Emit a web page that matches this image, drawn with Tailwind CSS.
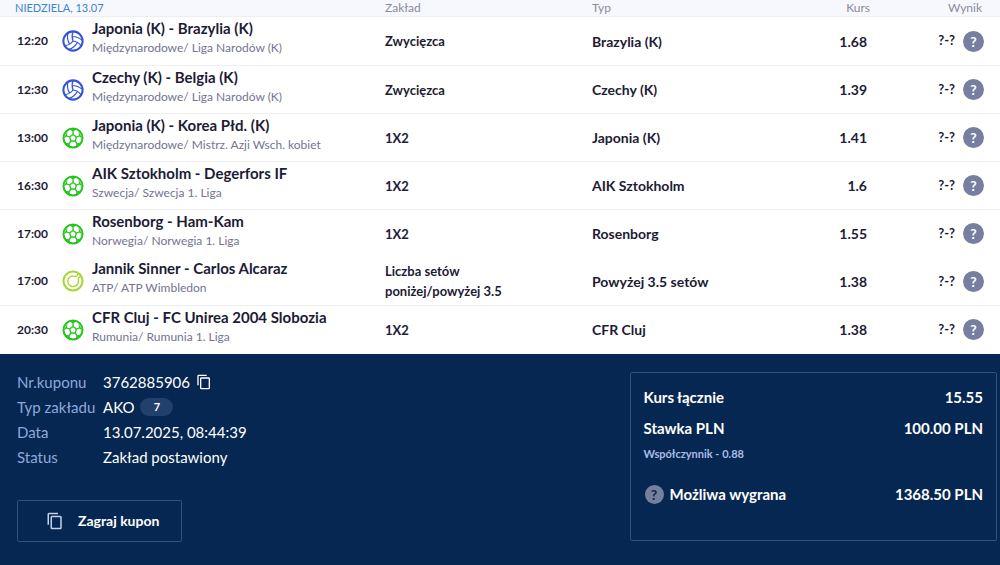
<!DOCTYPE html>
<html lang="pl">
<head>
  <meta charset="UTF-8">
  <meta name="viewport" content="width=device-width, initial-scale=1.0">
  <title>Kupon</title>
  <script src="https://cdn.jsdelivr.net/npm/@tailwindcss/browser@4"></script>
</head>
<body class="min-h-screen flex flex-col bg-[#062751] font-['Lato',sans-serif]">

<!-- Icons -->
<svg class="hidden">
  <symbol id="volleyball" viewBox="0 0 24 24">
    <g fill="none" stroke="#3553d6" stroke-linecap="round">
      <circle cx="12" cy="12" r="10.500" fill="#fff" stroke-width="2.200"/>
      <path stroke-width="1.300" d="M11.100 7.100a16.550 16.550 0 0 1 10.900 4M12 12a12.600 12.600 0 0 1-8.700 5M16.800 13.600a16.550 16.550 0 0 1-9 7.500M20.700 17a12.800 12.800 0 0 0-8.700-5 13.300 13.300 0 0 1 0-10M6.300 3.800a16.550 16.550 0 0 0 1.900 11.500"/>
    </g>
  </symbol>
  <symbol id="football" viewBox="0 0 22 22">
    <circle cx="11" cy="11" r="9.500" fill="#fff" stroke="#25c71a" stroke-width="2"/>
    <path d="M11 7.500L14.400 10L13.100 14H8.900L7.600 10ZM11 7.500V4.500M14.400 10L17.300 9M13.100 14L15 16.600M8.900 14L7 16.600M7.600 10L4.700 9" fill="none" stroke="#25c71a" stroke-width="1.300"/>
    <path d="M7.800 2H14.200L11 5ZM16.600 4.500L20.300 11.500L17 9.200ZM5.400 4.500L1.700 11.500L5 9.200ZM19 15.800L13.500 20.300L14.700 16.200ZM3 15.800L8.500 20.300L7.300 16.200Z" fill="#25c71a"/>
  </symbol>
  <symbol id="tennis" viewBox="0 0 22 22">
    <circle cx="11" cy="11" r="9.500" fill="#fff" stroke="#a3d82c" stroke-width="2"/>
    <path d="M15.500 3.500C16 6 14.500 6.800 12 6.300C8.500 5.600 5.800 8 5.800 11.200C5.800 14.500 8.500 16.800 11.500 16.500C15 16.200 16.800 13.500 16.300 10.500C16 8 17 6.800 18.500 7" fill="none" stroke="#a3d82c" stroke-width="1.300"/>
  </symbol>
  <symbol id="copy" viewBox="0 0 24 24">
    <path fill="currentColor" d="M16 1H4a2 2 0 0 0-2 2v14h2V3h12V1zm3 4H8a2 2 0 0 0-2 2v14a2 2 0 0 0 2 2h11a2 2 0 0 0 2-2V7a2 2 0 0 0-2-2zm0 16H8V7h11v14z"/>
  </symbol>
</svg>

<table class="w-full table-fixed border-collapse bg-white text-left text-[#1d1b35]">
  <colgroup>
    <col class="w-[62px]">
    <col>
    <col class="w-[207px]">
    <col class="w-[19%]">
    <col class="w-[88px]">
    <col class="w-[13%]">
  </colgroup>
  <thead class="bg-[#f7f8fd] text-xs leading-4 text-[#8a8b9c]">
  <tr class="h-[16px] border-b border-[#eceef3]">
    <th colspan="2" class="pl-[15px] text-[11px] font-normal text-[#3b86cf]">NIEDZIELA, 13.07</th>
    <th class="font-normal">Zakład</th>
    <th class="font-normal">Typ</th>
    <th class="font-normal text-right">Kurs</th>
    <th class="pr-[18px] font-normal text-right">Wynik</th>
  </tr>
  </thead>
  <tbody id="bets"></tbody>
</table>

<div class="flex grow items-start justify-between pt-[18px] pr-[3px] pl-[17px] text-white">
  <div class="-mt-[2px]">
    <dl class="grid grid-cols-[86px_auto] text-[15px] leading-[25px]">
      <dt class="text-[#8fa8dc]">Nr.kuponu</dt>
      <dd class="flex items-center gap-[6px]">3762885906
        <button aria-label="Kopiuj numer"><svg class="size-4"><use href="#copy"/></svg></button>
      </dd>
      <dt class="text-[#8fa8dc]">Typ zakładu</dt>
      <dd class="flex items-center gap-[6px]">AKO
        <span class="h-[18px] w-[33px] rounded-full bg-[#21406b] text-center text-[11px] leading-[18px] font-bold">7</span>
      </dd>
      <dt class="text-[#8fa8dc]">Data</dt>
      <dd>13.07.2025, 08:44:39</dd>
      <dt class="text-[#8fa8dc]">Status</dt>
      <dd>Zakład postawiony</dd>
    </dl>
    <button class="mt-[30px] flex h-[42px] items-center gap-[14px] rounded-xs border border-[#2f5180] pr-[22px] pl-[28px] text-[14px] font-bold">
      <svg class="size-[18px] text-[#c3d2e8]"><use href="#copy"/></svg>Zagraj kupon
    </button>
  </div>

  <dl class="grid w-[37.5%] min-w-[300px] grid-cols-[auto_auto] rounded-xs border border-[#2f5180] px-[13px] pt-[9px] pb-[30px] text-[15px] leading-[31px] font-bold">
    <dt>Kurs łącznie</dt>
    <dd class="text-right">15.55</dd>
    <dt>Stawka PLN</dt>
    <dd class="text-right">100.00 PLN</dd>
    <dt class="col-span-2 mb-[15px] text-[11px] leading-[20px] text-[#a9bbe6]">Współczynnik - 0.88</dt>
    <dt class="flex items-center gap-[6px]">
      <button aria-label="Informacja" class="ml-px size-[19px] rounded-full bg-[#777f9e] text-sm leading-[19px] font-bold text-[#062751]">?</button>Możliwa wygrana
    </dt>
    <dd class="text-right">1368.50 PLN</dd>
  </dl>
</div>

<script>
  const bets = [
    { time: "12:20", icon: "volleyball", match: "Japonia (K) - Brazylia (K)", league: "Międzynarodowe/ Liga Narodów (K)", bet: "Zwycięzca", type: "Brazylia (K)", odds: "1.68" },
    { time: "12:30", icon: "volleyball", match: "Czechy (K) - Belgia (K)", league: "Międzynarodowe/ Liga Narodów (K)", bet: "Zwycięzca", type: "Czechy (K)", odds: "1.39" },
    { time: "13:00", icon: "football", match: "Japonia (K) - Korea Płd. (K)", league: "Międzynarodowe/ Mistrz. Azji Wsch. kobiet", bet: "1X2", type: "Japonia (K)", odds: "1.41" },
    { time: "16:30", icon: "football", match: "AIK Sztokholm - Degerfors IF", league: "Szwecja/ Szwecja 1. Liga", bet: "1X2", type: "AIK Sztokholm", odds: "1.6" },
    { time: "17:00", icon: "football", match: "Rosenborg - Ham-Kam", league: "Norwegia/ Norwegia 1. Liga", bet: "1X2", type: "Rosenborg", odds: "1.55", noLine: true },
    { time: "17:00", icon: "tennis", match: "Jannik Sinner - Carlos Alcaraz", league: "ATP/ ATP Wimbledon", bet: "Liczba setów poniżej/powyżej 3.5", type: "Powyżej 3.5 setów", odds: "1.38" },
    { time: "20:30", icon: "football", match: "CFR Cluj - FC Unirea 2004 Slobozia", league: "Rumunia/ Rumunia 1. Liga", bet: "1X2", type: "CFR Cluj", odds: "1.38", noLine: true }
  ];

  document.getElementById("bets").innerHTML = bets.map(b => `
    <tr class="h-[48px] first:h-[49px] ${b.noLine ? '' : 'border-b border-[#eff0f5]'}">
      <td class="pl-[17px] text-xs font-bold">${b.time}</td>
      <td>
        <div class="flex items-center gap-[8px]">
          <svg class="size-[22px] shrink-0"><use href="#${b.icon}"/></svg>
          <div class="pb-[7px]">
            <div class="text-[15px] leading-[20px] font-bold">${b.match}</div>
            <div class="text-xs leading-[19px] text-[#737490]">${b.league}</div>
          </div>
        </div>
      </td>
      <td class="pr-[80px] text-[13px] leading-[20px] font-bold">${b.bet}</td>
      <td class="text-[14px] font-bold">${b.type}</td>
      <td class="pr-[3px] text-right text-[14px] font-bold">${b.odds}</td>
      <td class="pr-[16px]">
        <div class="flex items-center justify-end gap-[8px] text-[13px] font-bold">?-?
          <button aria-label="Wynik" class="size-[21px] rounded-full bg-[#777f9e] text-sm leading-[21px] font-bold text-white">?</button>
        </div>
      </td>
    </tr>
  `).join('');
</script>
</body>
</html>
